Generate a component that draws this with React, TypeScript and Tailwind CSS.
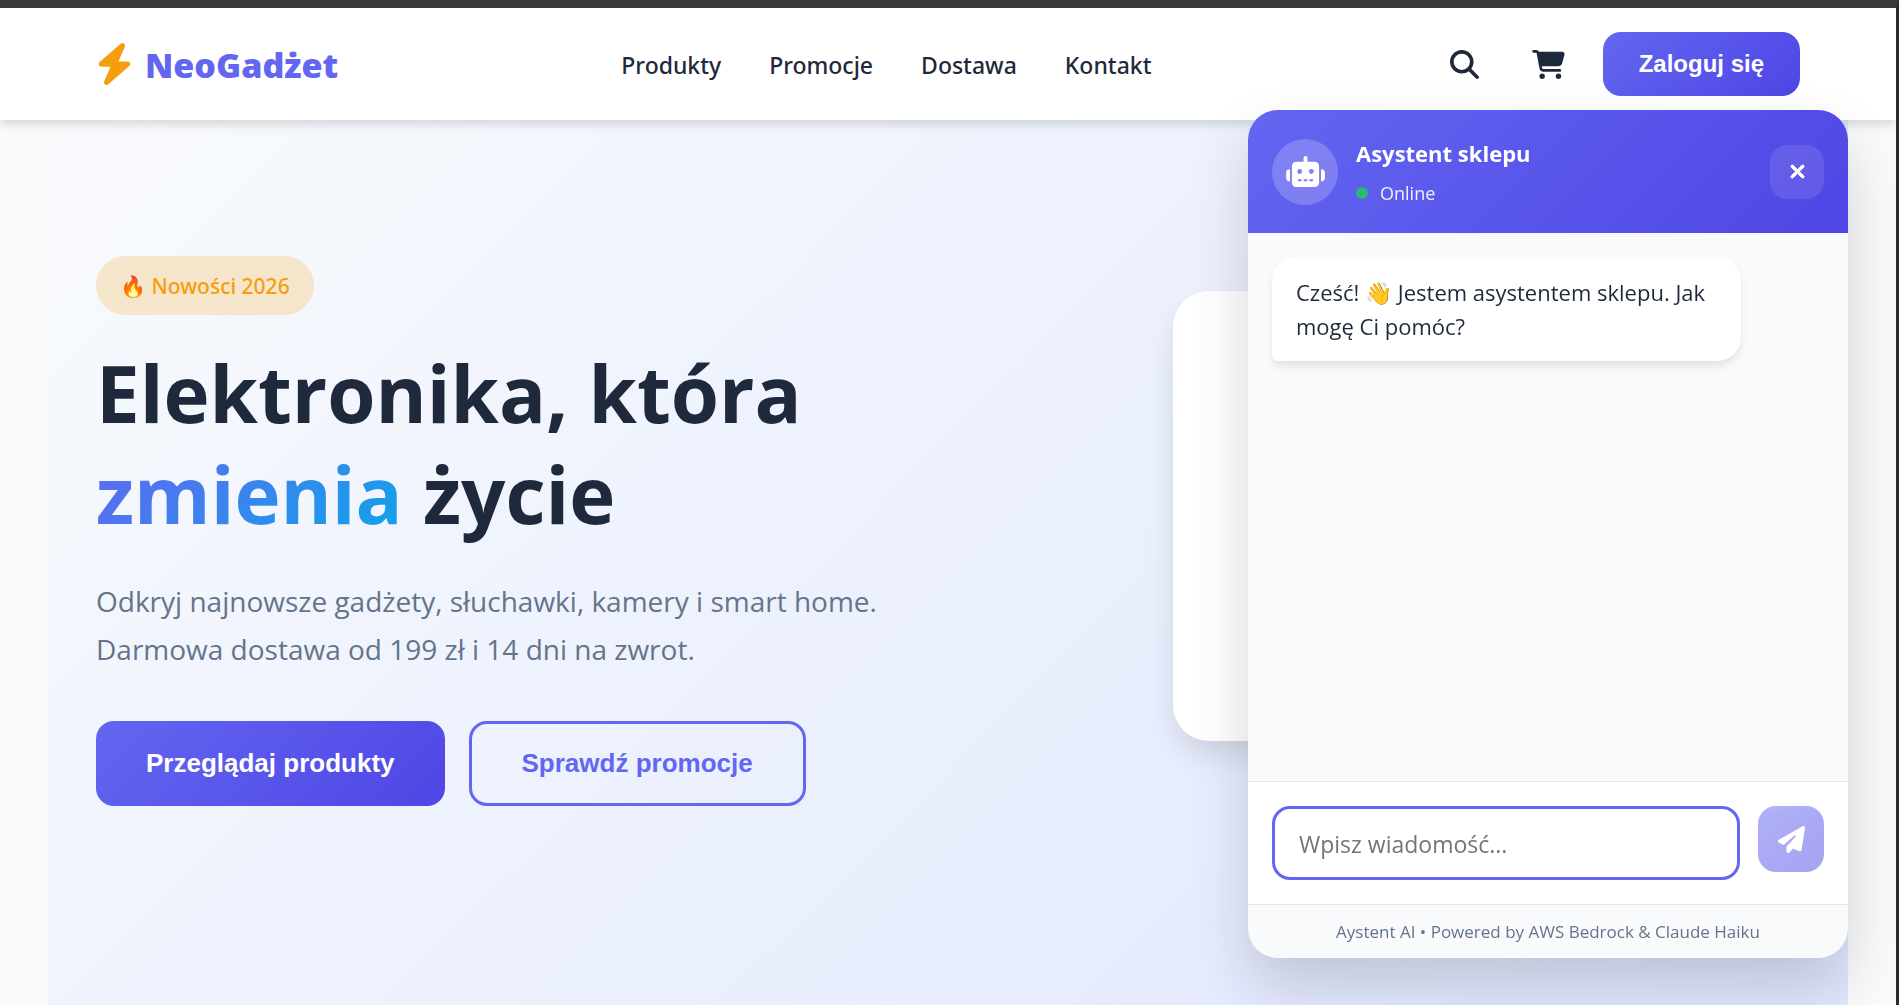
import { useState } from "react";
import {
  FaBolt,
  FaCartShopping,
  FaMagnifyingGlass,
  FaPaperPlane,
  FaRobot,
  FaXmark,
} from "react-icons/fa6";

const navLinks = [
  { label: "Produkty", href: "#produkty" },
  { label: "Promocje", href: "#promocje" },
  { label: "Dostawa", href: "#dostawa" },
  { label: "Kontakt", href: "#kontakt" },
];

function Header() {
  return (
    <header className="relative z-10 bg-white shadow-[0_6px_9px_-1px_rgba(0,0,0,0.13)]">
      <div className="mx-auto flex max-w-[1800px] items-center justify-between px-12 py-6">
        <a href="#" className="flex items-center gap-3">
          <FaBolt className="h-[42px] w-[37px] text-[#f59e0b]" />
          <span className="pt-0.5 text-[34px] leading-[48px] font-extrabold text-[#6366f1]">
            NeoGadżet
          </span>
        </a>

        <nav className="flex gap-12 pt-0.5 font-['Noto_Sans','Open_Sans',sans-serif]">
          {navLinks.map((link) => (
            <a key={link.label} href={link.href} className="text-[23px] leading-9 font-medium">
              {link.label}
            </a>
          ))}
        </nav>

        <div className="flex items-center gap-6">
          <button aria-label="Szukaj" className="flex size-[60px] items-center justify-center">
            <FaMagnifyingGlass className="size-[29px]" />
          </button>
          <button aria-label="Koszyk" className="flex size-[60px] items-center justify-center">
            <FaCartShopping className="h-[29px] w-[33px]" />
          </button>
          <button className="h-16 rounded-[18px] bg-linear-135/srgb from-[#6366f1] to-[#4f46e5] px-9 font-['Liberation_Sans',Arial,sans-serif] text-2xl font-bold text-white">
            Zaloguj się
          </button>
        </div>
      </div>
    </header>
  );
}

function Hero() {
  return (
    <main className="mx-auto grid w-full max-w-[1800px] flex-1 grid-cols-2 gap-24 bg-linear-135/srgb from-[#f8fafc] to-[#e0e7ff] px-12">
      <div className="pt-[136px]">
        <span className="inline-flex h-[59px] items-center rounded-[30px] bg-[#f59e0b]/20 px-6 pt-0.5 font-['Noto_Sans','Open_Sans',sans-serif] text-[21px] font-medium text-[#f59e0b]">
          🔥 Nowości 2026
        </span>
        <h1 className="mt-7 text-[78px] leading-[101px] font-bold">
          Elektronika, która
          <br />
          <span className="bg-linear-135/srgb from-[#6366f1] to-[#0ea5e9] bg-clip-text text-transparent">
            zmienia
          </span>{" "}
          życie
        </h1>
        <p className="mt-8 text-[28px] leading-12 text-[#64748b]">
          Odkryj najnowsze gadżety, słuchawki, kamery i smart home. Darmowa
          dostawa od 199 zł i 14 dni na zwrot.
        </p>
        <div className="mt-12 flex gap-6 font-['Liberation_Sans',Arial,sans-serif] text-[26px] font-bold">
          <button className="h-[85px] rounded-[18px] bg-linear-135/srgb from-[#6366f1] to-[#4f46e5] px-[50px] text-white">
            Przeglądaj produkty
          </button>
          <button className="h-[85px] rounded-[18px] border-3 border-[#6366f1] px-[50px] text-[#6366f1]">
            Sprawdź promocje
          </button>
        </div>
      </div>
      <div className="flex justify-center pt-[171px]">
        <div className="size-[450px] rounded-[36px] bg-white shadow-[0_15px_30px_-3px_rgba(0,0,0,0.12)]" />
      </div>
    </main>
  );
}

function ChatWidget() {
  const [message, setMessage] = useState("");

  return (
    <section
      aria-label="Asystent sklepu"
      className="fixed right-[51px] bottom-[47px] z-20 flex w-[600px] flex-col overflow-hidden rounded-[30px] bg-[#f8fafc] shadow-[0_30px_60px_rgba(0,0,0,0.16)]"
    >
      <div className="flex items-center gap-[18px] bg-linear-135/srgb from-[#6366f1] to-[#4f46e5] p-6 text-white">
        <div className="flex size-[66px] items-center justify-center rounded-full bg-white/20">
          <FaRobot className="h-[31px] w-[39px]" />
        </div>
        <div className="flex-1">
          <h2 className="text-[22px] leading-[39px] font-bold">Asystent sklepu</h2>
          <p className="mt-1 flex items-center gap-3 text-lg leading-8 text-white/90">
            <span className="size-3 rounded-full bg-[#2bb870]" />
            Online
          </p>
        </div>
        <button
          aria-label="Zamknij czat"
          className="flex size-[54px] items-center justify-center rounded-[18px] bg-white/10"
        >
          <FaXmark className="size-[21px] stroke-current stroke-[24px]" />
        </button>
      </div>

      <div className="min-h-[548px] p-6">
        <p className="w-[85%] rounded-3xl rounded-bl-md bg-white px-6 py-[18px] text-[22px] leading-[34px] shadow-[0_6px_9px_-1px_rgba(0,0,0,0.1)]">
          Cześć! 👋 Jestem asystentem sklepu. Jak mogę Ci pomóc?
        </p>
      </div>

      <form
        onSubmit={(e) => e.preventDefault()}
        className="flex items-start gap-[18px] border-t border-[#e2e8f0] bg-white p-6"
      >
        <input
          aria-label="Wiadomość"
          placeholder="Wpisz wiadomość..."
          value={message}
          onChange={(e) => setMessage(e.target.value)}
          className="h-[74px] min-w-0 flex-1 rounded-[18px] border-3 border-[#6366f1] px-6 pt-0.5 text-[23px] outline-none placeholder:text-[#757575]"
        />
        <button
          aria-label="Wyślij"
          disabled={!message}
          className="flex size-[66px] items-center justify-center rounded-[18px] bg-linear-135/srgb from-[#6366f1] to-[#4f46e5] text-white disabled:opacity-50"
        >
          <FaPaperPlane className="size-[27px]" />
        </button>
      </form>

      <p className="border-t border-[#e2e8f0] text-center text-[17px] leading-[53px] text-[#64748b]">
        Aystent AI • Powered by AWS Bedrock &amp; Claude Haiku
      </p>
    </section>
  );
}

export default function App() {
  return (
    <div className="flex h-screen flex-col overflow-hidden border-t-8 border-r-3 border-t-[#3b3b3b] border-r-[#2b2b2b] bg-[#f8fafc] font-['Open_Sans','Noto_Sans',sans-serif] text-[#1e293b]">
      <Header />
      <Hero />
      <ChatWidget />
    </div>
  );
}
